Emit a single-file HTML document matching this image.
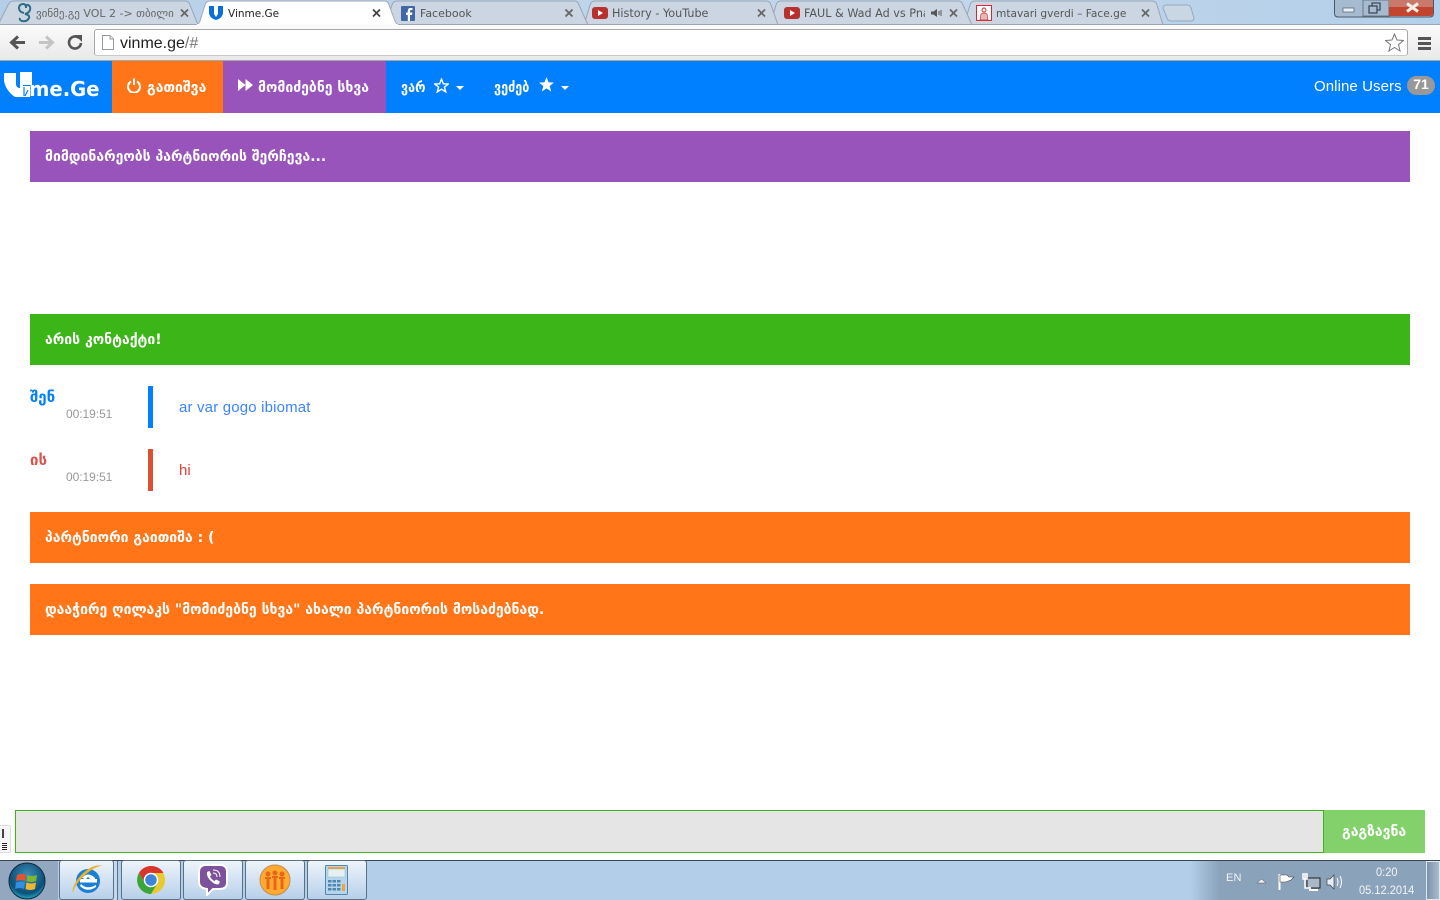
<!DOCTYPE html>
<html><head><meta charset="utf-8"><title>Vinme.Ge</title>
<style>
*{box-sizing:border-box}
html,body{margin:0;padding:0;width:1440px;height:900px;overflow:hidden;background:#fff;font-family:"Liberation Sans","DejaVu Sans",sans-serif}
.a{position:absolute}
.t{position:absolute;white-space:nowrap}
.geo{font-family:"DejaVu Sans","Liberation Sans",sans-serif;font-weight:bold}
.bar{position:absolute;left:30px;width:1380px;height:51px}
.bt{position:absolute;left:45px;white-space:nowrap;color:#fff;font-size:14px;font-family:"DejaVu Sans","Liberation Sans",sans-serif;font-weight:bold;line-height:20px;transform-origin:0 50%}
.tab{position:absolute;font-size:11px;line-height:14px;margin-top:-7px;color:#555;white-space:nowrap;overflow:hidden;font-family:"DejaVu Sans",sans-serif}
.task{position:absolute;top:860px;height:40px;background:linear-gradient(#eef4fb,#b7d0ea);border:1px solid #5b6f85;border-radius:3px}
</style></head><body>
<!-- chrome title/tab strip -->
<div class="a" style="left:0;top:0;width:1440px;height:25px;background:linear-gradient(90deg,#b6cfe8,#c2d7ec 60%,#b4cfe9)"></div>
<svg class="a" style="left:0;top:0" width="1440" height="26">
<path d="M1163 8 Q1163 5 1167 5 L1187 5 Q1190 5 1191 8 L1194 18 Q1194 21 1191 21 L1171 21 Q1168 21 1167 18Z" fill="#c9d6e4" stroke="#95a8bd"/>
<g fill="#cbd6e2" stroke="#98a6b6">
<path d="M964 25 L970 5 Q971 1 975 1 L1152 1 Q1156 1 1157 5 L1163 25Z"/>
<path d="M770 25 L776 5 Q777 1 781 1 L958 1 Q962 1 963 5 L972 25Z"/>
<path d="M584 25 L590 5 Q591 1 595 1 L766 1 Q770 1 771 5 L778 25Z"/>
<path d="M385 25 L392 5 Q393 1 397 1 L574 1 Q578 1 579 5 L588 25Z"/>
<path d="M-2 25 L8 5 Q10 1 14 1 L185 1 Q189 1 190 5 L198 25Z"/>
</g>
<rect x="0" y="24" width="1440" height="1" fill="#9aa6b3"/>
<path d="M196 25 Q199 24 200 21 L205 5 Q206 1 210 1 L384 1 Q388 1 389 5 L395 21 Q396 24 399 25Z" fill="#fff" stroke="#a0aab6"/>
<rect x="197" y="24" width="201" height="2" fill="#fbfbfb"/>
<g stroke="#666" stroke-width="1.800" fill="none">
<path d="M181 9.500 L188 16.500 M188 9.500 L181 16.500"/>
<path d="M373 9.500 L380 16.500 M380 9.500 L373 16.500" stroke="#444"/>
<path d="M565.500 9.500 L572.500 16.500 M572.500 9.500 L565.500 16.500"/>
<path d="M758 9.500 L765 16.500 M765 9.500 L758 16.500"/>
<path d="M950 9.500 L957 16.500 M957 9.500 L950 16.500"/>
<path d="M1142 9.500 L1149 16.500 M1149 9.500 L1142 16.500"/>
</g>
<path d="M24 13 Q19 12 19 8 Q19 4 23.500 4 Q26 4 26 8 Q26 4 28 5 Q31 6 30 10 Q29 13 25 14 Q30 15 29 18 Q27 22 22 21 Q19 20 20 18" fill="none" stroke="#2f6d86" stroke-width="2"/>
</svg>
<div class="tab" style="left:36px;top:14px;width:138px;color:#666">ვინმე.გე VOL 2 -&gt; თბილისი</div>
<svg class="a" style="left:209px;top:6px" width="14" height="14"><path d="M0 0 H5 V8 L7 11 L9 8 V0 H14 V6 Q14 12 7 14 Q0 12 0 6Z" fill="#0b6fd8"/></svg>
<div class="tab" style="left:228px;top:14px;color:#222;font-size:10.500px">Vinme.Ge</div>
<svg class="a" style="left:401px;top:6px" width="14" height="15"><rect width="14" height="15" rx="1" fill="#4267a7"/><path d="M9 15 V9 H11 L11.400 6.500 H9 V5 Q9 4 10 4 H11.500 V2 H9.500 Q6.800 2 6.800 4.800 V6.500 H5 V9 H6.800 V15Z" fill="#fff"/></svg>
<div class="tab" style="left:420px;top:14px">Facebook</div>
<svg class="a" style="left:592px;top:7px" width="16" height="12"><rect width="16" height="12" rx="3" fill="#b8312f"/><path d="M6 3 L11 6 L6 9Z" fill="#fff"/></svg>
<div class="tab" style="left:612px;top:14px;font-size:11.200px">History - YouTube</div>
<svg class="a" style="left:784px;top:7px" width="16" height="12"><rect width="16" height="12" rx="3" fill="#b8312f"/><path d="M6 3 L11 6 L6 9Z" fill="#fff"/></svg>
<div class="tab" style="left:804px;top:14px;width:121px;font-size:11.200px">FAUL &amp; Wad Ad vs Pnau</div>
<svg class="a" style="left:931px;top:8px" width="12" height="10"><path d="M0 3.500H2.500L6 1V9L2.500 6.500H0Z" fill="#555"/><path d="M8 3V7M10 2V8" stroke="#555" fill="none"/></svg>
<svg class="a" style="left:976px;top:5px" width="16" height="16"><rect x=".5" y=".5" width="15" height="15" fill="#fff" stroke="#e0232e"/><circle cx="8" cy="5" r="2" fill="none" stroke="#c33"/><path d="M4 15 L5 9 Q8 7 11 9 L12 15Z" fill="#e8b8b8" stroke="#c33" stroke-width=".7"/></svg>
<div class="tab" style="left:996px;top:14px;font-size:10.600px">mtavari gverdi – Face.ge</div>
<!-- window buttons -->
<svg class="a" style="left:1334px;top:0" width="100" height="18">
<path d="M.5 0 V13 Q.5 17 4 17 H96 Q99.5 17 99.5 13 V0Z" fill="#a9bfd6" stroke="#4a5868"/>
<path d="M1 0H29V16H4Q1 16 1 13Z" fill="#a7bbd0"/><path d="M29 0H55V16H29Z" fill="#a7bbd0" stroke="#64788c"/>
<path d="M55 0H99V13Q99 16 96 16H55Z" fill="#c4452f"/><path d="M55 0H99V7H55Z" fill="#c8796c"/>
<rect x="9" y="8" width="11" height="4" fill="#e8eef4" stroke="#50606f" stroke-width=".7"/>
<rect x="35" y="6" width="8" height="7" fill="none" stroke="#3d4c5a" stroke-width="1.300"/><path d="M38 6V3H46V10H43" fill="none" stroke="#3d4c5a" stroke-width="1.300"/>
<path d="M73 3.500 L84 11.500 M84 3.500 L73 11.500" stroke="#f1efe9" stroke-width="3"/>
</svg>
<!-- toolbar -->
<div class="a" style="left:0;top:25px;width:1440px;height:35px;background:linear-gradient(#fbfbfb,#e9e9e9)"></div>
<div class="a" style="left:0;top:60px;width:1440px;height:1px;background:#a6a6a6"></div>
<svg class="a" style="left:0;top:28px" width="90" height="28" fill="none">
<path d="M25 14.500 H12 M18 8.500 L11.500 14.500 L18 20.500" stroke="#555" stroke-width="3"/>
<path d="M39 14.500 H52 M46 8.500 L52.500 14.500 L46 20.500" stroke="#c4c4c4" stroke-width="3"/>
<path d="M81 15 A6 6 0 1 1 79 10" stroke="#555" stroke-width="2.600"/><path d="M75 7 L82 7 L82 14Z" fill="#555"/>
</svg>
<div class="a" style="left:94px;top:29px;width:1314px;height:27px;background:#fff;border:1px solid #a9a9a9;border-bottom-color:#c9c9c9;border-radius:3px"></div>
<svg class="a" style="left:102px;top:35px" width="12" height="15"><path d="M.5 .5H8L11.500 4V14.500H.5Z" fill="#fff" stroke="#999"/><path d="M8 .5V4H11.500" fill="#eee" stroke="#999"/></svg>
<div class="t" style="left:120px;top:35px;font-size:16px;line-height:18px;color:#222">vinme.ge<span style="color:#777">/#</span></div>
<svg class="a" style="left:1385px;top:33px" width="19" height="19"><path d="M9.500 1 L12 7 L18.500 7.500 L13.500 11.600 L15.100 18 L9.500 14.500 L3.900 18 L5.500 11.600 L.5 7.500 L7 7Z" fill="#fff" stroke="#777"/></svg>
<div class="a" style="left:1418px;top:37px;width:13px;height:3px;background:#555"></div>
<div class="a" style="left:1418px;top:42px;width:13px;height:3px;background:#555"></div>
<div class="a" style="left:1418px;top:47px;width:13px;height:3px;background:#555"></div>
<!-- navbar -->
<div class="a" style="left:0;top:61px;width:1440px;height:52px;background:#007fff"></div>
<div class="a" style="left:112px;top:61px;width:111px;height:52px;background:#ff7518"></div>
<div class="a" style="left:223px;top:61px;width:163px;height:52px;background:#9954bb"></div>
<svg class="a" style="left:3px;top:71px" width="30" height="27"><path d="M1 2 H13 V14 Q14 17 17 17 V1 H29 V14 H20 V26 H12 Q3 20 1 10Z" fill="#fff"/><path d="M20 15 V26 H27 V15Z" fill="#fff"/><path d="M21 16 V25 M25 19 L22 25" stroke="#007fff" stroke-width="1.200"/></svg>
<div class="t" style="left:29px;top:77px;font:bold 20px/24px 'DejaVu Sans',sans-serif;color:#fff;transform-origin:0 50%;transform:scaleX(.98)">me.Ge</div>
<svg class="a" style="left:127px;top:78px" width="14" height="15" fill="none" stroke="#fff" stroke-width="2"><path d="M4 3.500 A6 6 0 1 0 10 3.500"/><path d="M7 0.500 V7"/></svg>
<div class="bt" style="left:147px;top:78px;font-size:14px">გათიშვა</div>
<svg class="a" style="left:238px;top:79px" width="15" height="12" fill="#fff"><path d="M0 0 L7.500 6 L0 12Z M7.500 0 L15 6 L7.500 12Z"/></svg>
<div class="bt" style="left:258px;top:78px;font-size:14px">მომიძებნე სხვა</div>
<div class="bt" style="left:401px;top:78px;font-size:14px;transform:scaleX(.9)">ვარ</div>
<svg class="a" style="left:434px;top:78px" width="15" height="15"><path d="M7.500 1 L9.300 5.800 L14.400 6 L10.400 9.100 L11.800 14 L7.500 11.200 L3.200 14 L4.600 9.100 L.6 6 L5.700 5.800Z" fill="none" stroke="#fff" stroke-width="1.400"/></svg>
<div class="a" style="left:456px;top:86px;width:0;height:0;border:4px solid transparent;border-top-color:#fff"></div>
<div class="bt" style="left:494px;top:78px;font-size:14px;transform:scaleX(.9)">ვეძებ</div>
<svg class="a" style="left:539px;top:77px" width="15" height="15"><path d="M7.500 0 L9.500 5.300 L15 5.600 L10.700 9 L12.200 14.500 L7.500 11.400 L2.800 14.500 L4.300 9 L0 5.600 L5.500 5.300Z" fill="#fff"/></svg>
<div class="a" style="left:561px;top:86px;width:0;height:0;border:4px solid transparent;border-top-color:#fff"></div>
<div class="t" style="left:1314px;top:78px;font-size:15px;line-height:18px;color:#fff;letter-spacing:.08px">Online Users</div>
<div class="a" style="left:1407px;top:76px;width:28px;height:19px;border-radius:10px;background:#999;color:#fff;font:bold 14px/17px 'Liberation Sans',sans-serif;text-align:center">71</div>
<!-- content bars -->
<div class="bar" style="top:131px;background:#9954bb"></div>
<div class="bt" style="top:147px">მიმდინარეობს პარტნიორის შერჩევა...</div>
<div class="bar" style="top:314px;background:#3cb518"></div>
<div class="bt" style="top:330px">არის კონტაქტი!</div>
<div class="t geo" style="left:30px;top:387px;font-size:15px;line-height:20px;color:#007fff">შენ</div>
<div class="t" style="left:66px;top:407px;font-size:12px;line-height:14px;color:#999;letter-spacing:-.05px">00:19:51</div>
<div class="a" style="left:148px;top:386px;width:5px;height:42px;background:#007fff"></div>
<div class="t" style="left:179px;top:399px;font-size:15px;line-height:18px;color:#3a85ff;letter-spacing:.17px">ar var gogo ibiomat</div>
<div class="t geo" style="left:30px;top:450px;font-size:15px;line-height:20px;color:#d9534f">ის</div>
<div class="t" style="left:66px;top:470px;font-size:12px;line-height:14px;color:#999;letter-spacing:-.05px">00:19:51</div>
<div class="a" style="left:148px;top:449px;width:5px;height:42px;background:#d9512f"></div>
<div class="t" style="left:179px;top:462px;font-size:15px;line-height:18px;color:#e2403c">hi</div>
<div class="bar" style="top:512px;background:#ff7518"></div>
<div class="bt" style="top:528px">პარტნიორი გაითიშა : (</div>
<div class="bar" style="top:584px;background:#ff7518"></div>
<div class="bt" style="top:600px">დააჭირე ღილაკს "მომიძებნე სხვა" ახალი პარტნიორის მოსაძებნად.</div>
<!-- input -->
<div class="a" style="left:15px;top:810px;width:1309px;height:43px;background:#e5e5e5;border:1px solid #3cb518"></div>
<div class="a" style="left:1324px;top:810px;width:101px;height:43px;background:#83d16b"></div>
<div class="bt" style="left:1342px;top:822px;font-size:14px">გაგზავნა</div>
<div class="a" style="left:0;top:825px;width:11px;height:28px;background:#f6f6f6;border:1px solid #ddd;border-left:0;border-radius:0 2px 2px 0"></div>
<div class="a" style="left:2px;top:829px;width:2px;height:9px;background:#444"></div>
<div class="a" style="left:2px;top:843px;width:5px;height:7px;background:repeating-linear-gradient(#222 0 1px,#fff 1px 2px)"></div>
<!-- taskbar -->
<div class="a" style="left:0;top:860px;width:1440px;height:40px;background:#b3cee9;border-top:1px solid #3c4650"></div>
<div class="a" style="left:0;top:861px;width:58px;height:39px;background:#93a8c0"></div>
<div class="a" style="left:1190px;top:861px;width:250px;height:39px;background:linear-gradient(90deg,#b3cee9,#8ba2bb 30px)"></div>
<svg class="a" style="left:8px;top:862px" width="38" height="38"><defs><radialGradient id="o" cx=".5" cy=".35" r=".7"><stop offset="0" stop-color="#3f8fb8"/><stop offset=".7" stop-color="#0c4f78"/><stop offset="1" stop-color="#29c4d8"/></radialGradient></defs><circle cx="19" cy="19" r="18" fill="url(#o)" stroke="#13293d"/><path d="M9 13 Q13 11 18 13 L17 19 Q13 17 8 19Z" fill="#e8502f"/><path d="M19.500 13 Q24 15 29 13 L28 19 Q23 21 18.500 19Z" fill="#7cb82f"/><path d="M8 20.500 Q13 18.500 17 20.500 L16 27 Q12 25 7 27Z" fill="#2f8fe0"/><path d="M18.500 20.500 Q23 22.500 28 20.500 L27 27 Q22 29 17.500 27Z" fill="#f2b52f"/></svg>
<div class="task" style="left:59px;width:55px"></div>
<div class="a" style="left:114px;top:861px;width:4px;height:39px;background:#c5d9ee;border-right:1px solid #5b6f85"></div>
<div class="task" style="left:121px;width:60px"></div>
<div class="task" style="left:183px;width:60px"></div>
<div class="task" style="left:245px;width:60px"></div>
<div class="task" style="left:307px;width:60px"></div>
<svg class="a" style="left:70px;top:864px" width="34" height="32"><ellipse cx="18" cy="17" rx="12" ry="12" fill="#1b7fd4"/><rect x="10" y="15" width="17" height="3.500" fill="#fff"/><path d="M12 14 Q18 7 25 14 L25 15.500 H20 Q18 11 16 15.500Z" fill="#fff"/><path d="M11 20 Q17 26 26 21 L26 23 Q17 29 10 22Z" fill="#fff"/><path d="M3 29 Q1 22 12 10 Q24 -1 33 2 Q27 1 15 11 Q5 20 3 29Z" fill="#e8b32a"/></svg>
<svg class="a" style="left:136px;top:865px" width="30" height="30"><circle cx="15" cy="15" r="14" fill="#e8c92f"/><path d="M15 1 A14 14 0 0 0 3 8 L9 18 A7 7 0 0 1 15 8 H27.500 A14 14 0 0 0 15 1Z" fill="#d9352c"/><path d="M3 8 A14 14 0 0 0 15 29 L21 19 A7 7 0 0 1 9 18Z" fill="#3ba53b"/><circle cx="15" cy="15" r="6.500" fill="#3d85d8" stroke="#fff" stroke-width="1.500"/></svg>
<svg class="a" style="left:198px;top:864px" width="30" height="32"><path d="M8 1 H22 Q29 1 29 8 V19 Q29 25 21 25 H15 L9 31 V25 Q1 24 1 18 V8 Q1 1 8 1Z" fill="#7d529c" stroke="#fff" stroke-width="2"/><path d="M9 8 L11.500 7 L13.500 11 L12 12.500 Q13.500 15.500 16.500 17 L18 15.500 L22 17.500 L21 20 Q18.500 21.500 14 18 Q8 13 9 8Z" fill="#fff"/><path d="M15 6 Q22 6 22 13 M15 9 Q19 9 19 13" stroke="#fff" fill="none"/></svg>
<svg class="a" style="left:259px;top:864px" width="32" height="32"><circle cx="16" cy="16" r="15" fill="#ffab2e" stroke="#c98a50"/><g fill="#e8651a"><circle cx="9" cy="10" r="2.500"/><circle cx="16" cy="9" r="2.500"/><circle cx="23" cy="10" r="2.500"/><path d="M6 13 H12 V15 H10.500 V25 H7.500 V15 H6Z M13 12 H19 V14 H17.500 V26 H14.500 V14 H13Z M20 13 H26 V15 H24.500 V25 H21.500 V15 H20Z"/></g></svg>
<svg class="a" style="left:325px;top:865px" width="23" height="30"><rect x=".5" y=".5" width="22" height="29" rx="1" fill="#b8d4ea" stroke="#4f87b2"/><rect x="3" y="2" width="17" height="2" fill="#f0a23c"/><rect x="3" y="4" width="17" height="8" fill="#e6eff6" stroke="#7ba" stroke-width=".4"/><g fill="#4f87b2"><rect x="3" y="15" width="3.500" height="2.500"/><rect x="7.500" y="15" width="3.500" height="2.500"/><rect x="12" y="15" width="3.500" height="2.500"/><rect x="3" y="19" width="3.500" height="2.500"/><rect x="7.500" y="19" width="3.500" height="2.500"/><rect x="12" y="19" width="3.500" height="2.500"/><rect x="3" y="23" width="3.500" height="2.500"/><rect x="7.500" y="23" width="3.500" height="2.500"/><rect x="12" y="23" width="3.500" height="2.500"/></g><rect x="17" y="19" width="3" height="7" fill="#f0a23c"/></svg>
<!-- tray -->
<div class="t" style="left:1226px;top:871px;font-size:11px;line-height:14px;color:#f2f5f8;letter-spacing:.2px">EN</div>
<svg class="a" style="left:1256px;top:870px" width="100" height="24" fill="none">
<path d="M1 13 L5.500 9 L10 13Z" fill="#f2f2f2" stroke="#555" stroke-width=".5"/>
<path d="M23.500 4 V20" stroke="#fff" stroke-width="2"/><path d="M24 5 H31 L33 7 H38 L35 10 L30 12 H24Z" fill="#fff" stroke="#444" stroke-width=".6"/>
<rect x="51" y="8" width="13" height="10" fill="#aab9c8" stroke="#222"/><path d="M49 5 V18 H55 M47 4 H51 V9 H47Z" stroke="#fff" stroke-width="1.500"/><path d="M53 20 H62" stroke="#fff" stroke-width="2"/>
<path d="M71 9 H74 L78 5 V19 L74 15 H71Z" fill="#e8eef4" stroke="#444" stroke-width=".7"/><path d="M81 8 Q83 12 81 16 M84 6 Q87 12 84 18" stroke="#fff"/>
</svg>
<div class="t" style="left:1376px;top:865px;font-size:12px;line-height:14px;color:#f2f5f8;transform-origin:0 50%;transform:scaleX(.92)">0:20</div>
<div class="t" style="left:1359px;top:883px;font-size:12px;line-height:14px;color:#f2f5f8;transform-origin:0 50%;transform:scaleX(.92)">05.12.2014</div>
<div class="a" style="left:1426px;top:861px;width:14px;height:39px;background:linear-gradient(90deg,#7f93aa,#a9bccf);border:1px solid #dfe7ef"></div>
</body></html>
